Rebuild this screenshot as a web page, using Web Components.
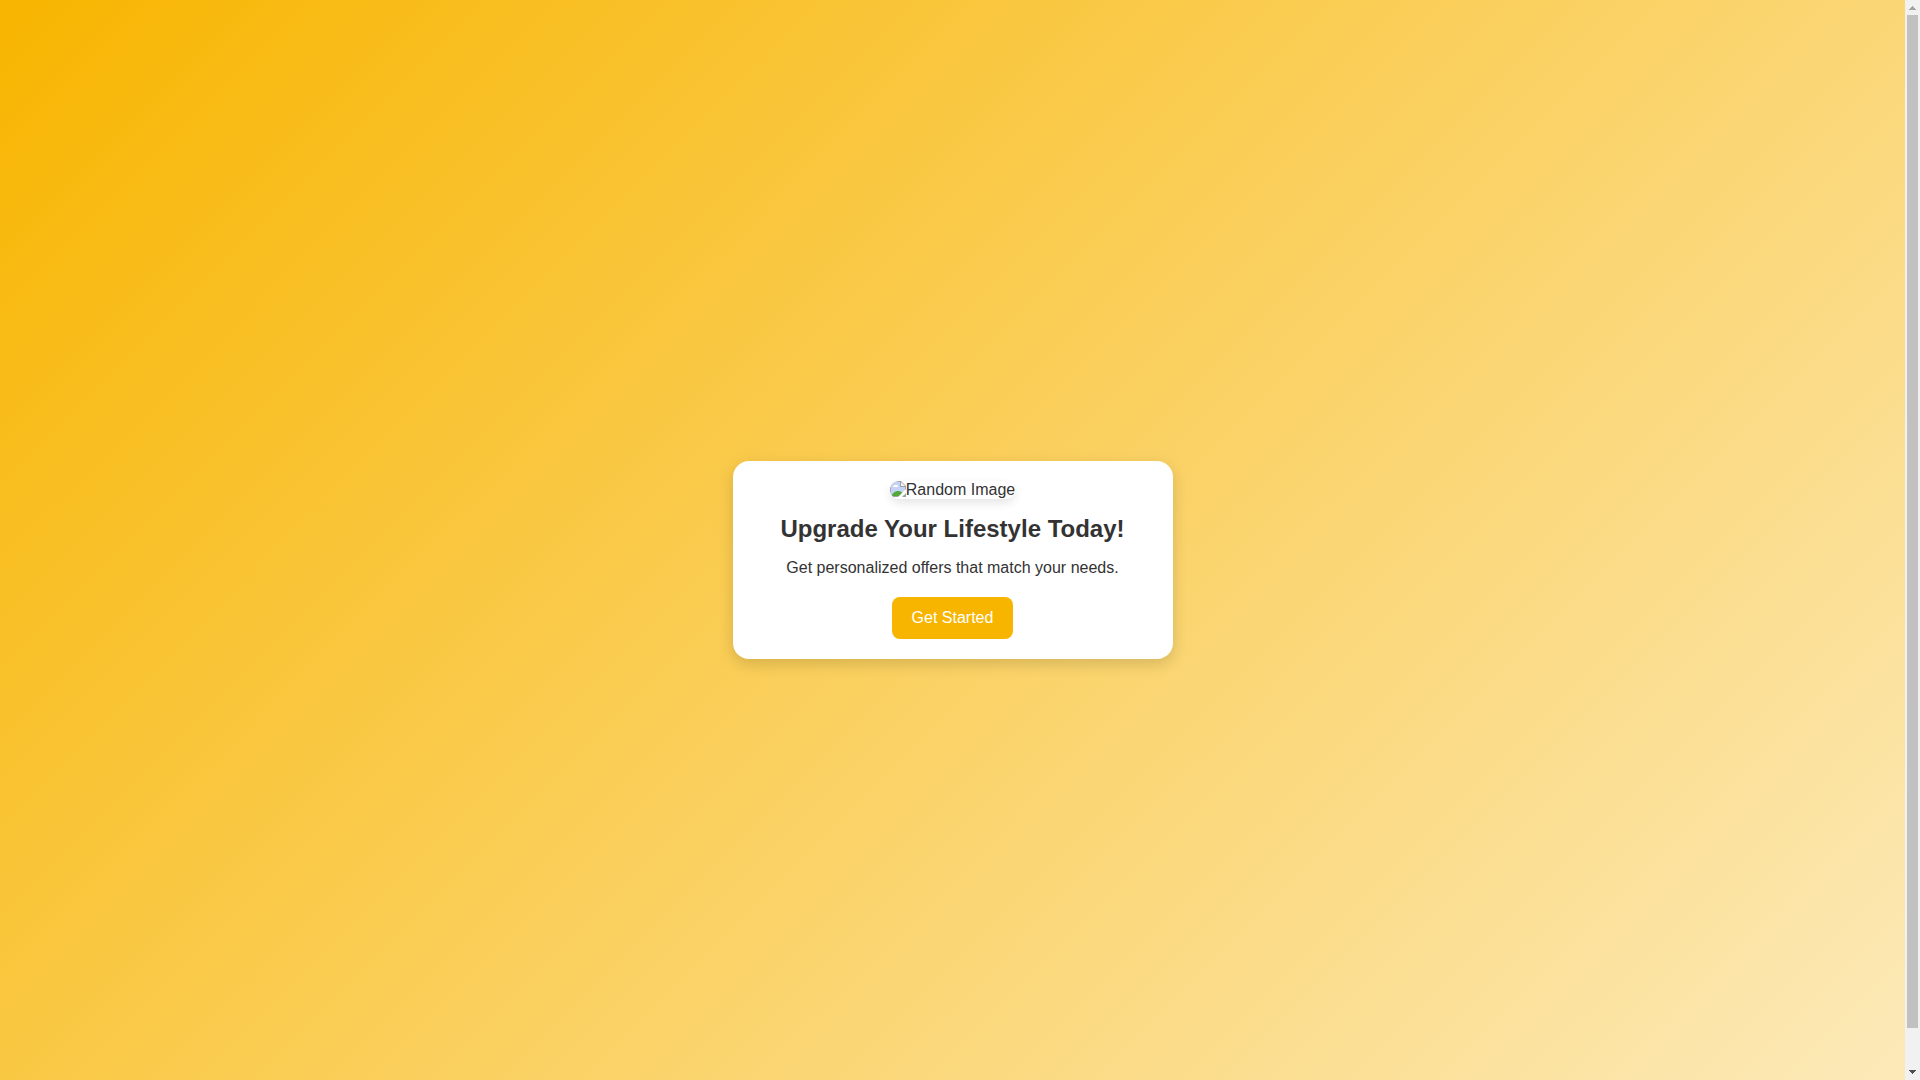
<!DOCTYPE html>
<html lang="en">
<head>
<meta charset="utf-8">
<title>Upgrade Your Lifestyle Today!</title>
<style>
  body { margin: 0; font-family: "Liberation Sans", Arial, sans-serif; font-size: 16px; color: #333; }
</style>
</head>
<body>
<scroll-frame>
  <offer-page>
    <offer-card>
      <missing-image slot="media">Random Image</missing-image>
      <span slot="title">Upgrade Your Lifestyle Today!</span>
      <span slot="text">Get personalized offers that match your needs.</span>
      <action-link slot="action">Get Started</action-link>
    </offer-card>
  </offer-page>
</scroll-frame>
<script>
  class BaseElement extends HTMLElement {
    constructor() {
      super();
      this.attachShadow({ mode: "open" }).innerHTML = this.constructor.markup;
    }
  }

  // Viewport with a classic scrollbar beside its content
  customElements.define("scroll-frame", class extends BaseElement {
    static markup = `
      <style>
        :host { display: flex; height: 100vh; overflow: hidden; }
        .view { flex: 1; min-width: 0; overflow: hidden; }
        .bar { flex: none; display: flex; flex-direction: column; width: 15px; background: #f1f1f1; }
        .track { flex: 1; min-height: 0; padding: 0 2px; }
        .thumb { height: calc(100% * 27 / 28); background: #c1c1c1; }
        svg { display: block; flex: none; }
      </style>
      <div class="view"><slot></slot></div>
      <div class="bar" aria-hidden="true">
        <svg width="15" height="15" viewBox="0 0 15 15" shape-rendering="crispEdges"><path d="M7 6H8V7H9V8H10V9H11V10H4V9H5V8H6V7H7Z" fill="#a3a3a3"/></svg>
        <div class="track"><div class="thumb"></div></div>
        <svg width="15" height="15" viewBox="0 0 15 15" shape-rendering="crispEdges"><path d="M4 5H11V6H10V7H9V8H8V9H7V8H6V7H5V6H4Z" fill="#505050"/></svg>
      </div>`;
  });

  customElements.define("offer-page", class extends BaseElement {
    static markup = `
      <style>
        :host { display: flex; justify-content: center; align-items: center; height: 100vh; padding: 20px;
          background: linear-gradient(135deg, #f8b500, #fceabb); }
      </style>
      <slot></slot>`;
  });

  customElements.define("offer-card", class extends BaseElement {
    static markup = `
      <style>
        :host { display: block; width: 100%; max-width: 400px; padding: 20px; background: #fff;
          border-radius: 16px; box-shadow: 0 5px 15px rgba(0, 0, 0, 0.15); text-align: center; }
        h1 { margin: 16px 0; font-size: 24px; line-height: 28px; }
        p { margin: 0 0 20px; line-height: 18px; }
        .media, .action { display: flex; justify-content: center; }
      </style>
      <div class="media"><slot name="media"></slot></div>
      <h1><slot name="title"></slot></h1>
      <p><slot name="text"></slot></p>
      <div class="action"><slot name="action"></slot></div>`;
  });

  customElements.define("missing-image", class extends BaseElement {
    static markup = `
      <style>
        :host { display: flex; overflow: hidden; line-height: 18px; border-radius: 12px;
          box-shadow: 0 4px 10px rgba(0, 0, 0, 0.1); }
        svg { flex: none; display: block; }
      </style>
      <svg width="16" height="16" viewBox="0 0 16 16" aria-hidden="true">
        <path d="M0 0H11L16 5V16H0Z" fill="#a0a0a4"/>
        <path d="M1 1H10V6H15V15H1Z" fill="#c3d3f5"/>
        <path d="M3 6a2 2 0 0 1 2-2a2 2 0 0 1 3 2Z" fill="#fff"/>
        <path d="M1 15Q4 10 8 10Q12 10 15 15Z" fill="#54a738"/>
        <path d="M11 1V5H15Z" fill="#f4f4f4"/>
        <path d="M8 16L16 8V12L12 16Z" fill="#fff"/>
      </svg>
      <slot></slot>`;
  });

  customElements.define("action-link", class extends BaseElement {
    static markup = `
      <style>
        :host { display: block; }
        a { display: block; padding: 12px 20px; line-height: 18px; border-radius: 8px;
          background: #f8b500; color: #fff; text-decoration: none; }
      </style>
      <a href="#"><slot></slot></a>`;
  });
</script>
</body>
</html>
